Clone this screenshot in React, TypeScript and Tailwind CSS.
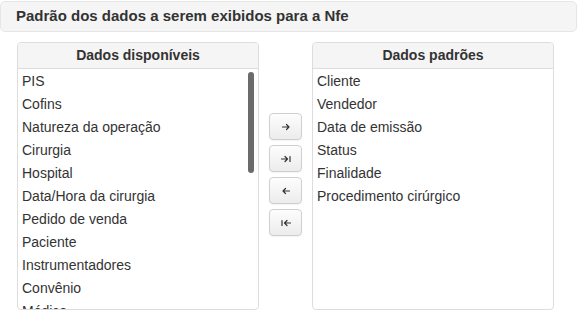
import React from "react";

const available = [
  "PIS",
  "Cofins",
  "Natureza da operação",
  "Cirurgia",
  "Hospital",
  "Data/Hora da cirurgia",
  "Pedido de venda",
  "Paciente",
  "Instrumentadores",
  "Convênio",
  "Médico",
];

const defaults = [
  "Cliente",
  "Vendedor",
  "Data de emissão",
  "Status",
  "Finalidade",
  "Procedimento cirúrgico",
];

function Panel({ title, items, scroll }: { title: string; items: string[]; scroll?: boolean }) {
  return (
    <div className="w-[242px] h-[268px] border border-[#dddddd] rounded-[4px] bg-white flex flex-col overflow-hidden">
      <div className="h-[26px] shrink-0 bg-[#f5f5f5] border-b border-[#dddddd] flex items-center justify-center font-bold text-[14px] text-[#333333]">
        {title}
      </div>
      <div className="relative flex-1 overflow-hidden">
        <ul className="pl-[4px] pt-[1px]">
          {items.map((it) => (
            <li key={it} className="h-[23px] flex items-center text-[14px] text-[#333333] whitespace-nowrap">
              {it}
            </li>
          ))}
        </ul>
        {scroll && (
          <div className="absolute left-[230px] top-[3px] w-[6px] h-[101px] rounded-full bg-[#6b6b6b]" />
        )}
      </div>
    </div>
  );
}

function Btn({ children }: { children: React.ReactNode }) {
  return (
    <div className="w-[33px] h-[27px] rounded-[4px] border border-[#cfcfcf] bg-gradient-to-b from-[#fdfdfd] to-[#ececec] flex items-center justify-center text-[#333333] shadow-[0_1px_1px_rgba(0,0,0,0.05)]">
      {children}
    </div>
  );
}

const stroke = { stroke: "#333333", strokeWidth: 1.2, fill: "none", strokeLinecap: "round" as const, strokeLinejoin: "round" as const };

function Right() {
  return (
    <svg width="10" height="8" viewBox="0 0 10 8">
      <path d="M1.5 4 H8 M5.5 1.5 L8 4 L5.5 6.5" {...stroke} />
    </svg>
  );
}
function RightBar() {
  return (
    <svg width="10" height="8" viewBox="0 0 10 8">
      <path d="M0.5 4 H6.5 M4 1.5 L6.5 4 L4 6.5 M9 1.5 V6.5" {...stroke} />
    </svg>
  );
}
function Left() {
  return (
    <svg width="10" height="8" viewBox="0 0 10 8">
      <path d="M8.5 4 H2 M4.5 1.5 L2 4 L4.5 6.5" {...stroke} />
    </svg>
  );
}
function LeftBar() {
  return (
    <svg width="10" height="8" viewBox="0 0 10 8">
      <path d="M9.5 4 H3.5 M6 1.5 L3.5 4 L6 6.5 M1 1.5 V6.5" {...stroke} />
    </svg>
  );
}

export default function App() {
  return (
    <div
      className="w-[579px] h-[323px] bg-white pt-[1px] overflow-hidden"
      style={{ fontFamily: '"Liberation Sans", Arial, sans-serif' }}
    >
      <div className="w-[577px] h-[31px] rounded-[5px] border border-[#e6e6e6] bg-[#f5f5f5] flex items-center pl-[15px] font-bold text-[15px] text-[#333333]">
        Padrão dos dados a serem exibidos para a Nfe
      </div>
      <div className="flex mt-[10px] ml-[17px]">
        <Panel title="Dados disponíveis" items={available} scroll />
        <div className="w-[53px] flex flex-col items-center pt-[71px] gap-[5px]">
          <Btn><Right /></Btn>
          <Btn><RightBar /></Btn>
          <Btn><Left /></Btn>
          <Btn><LeftBar /></Btn>
        </div>
        <Panel title="Dados padrões" items={defaults} />
      </div>
    </div>
  );
}
